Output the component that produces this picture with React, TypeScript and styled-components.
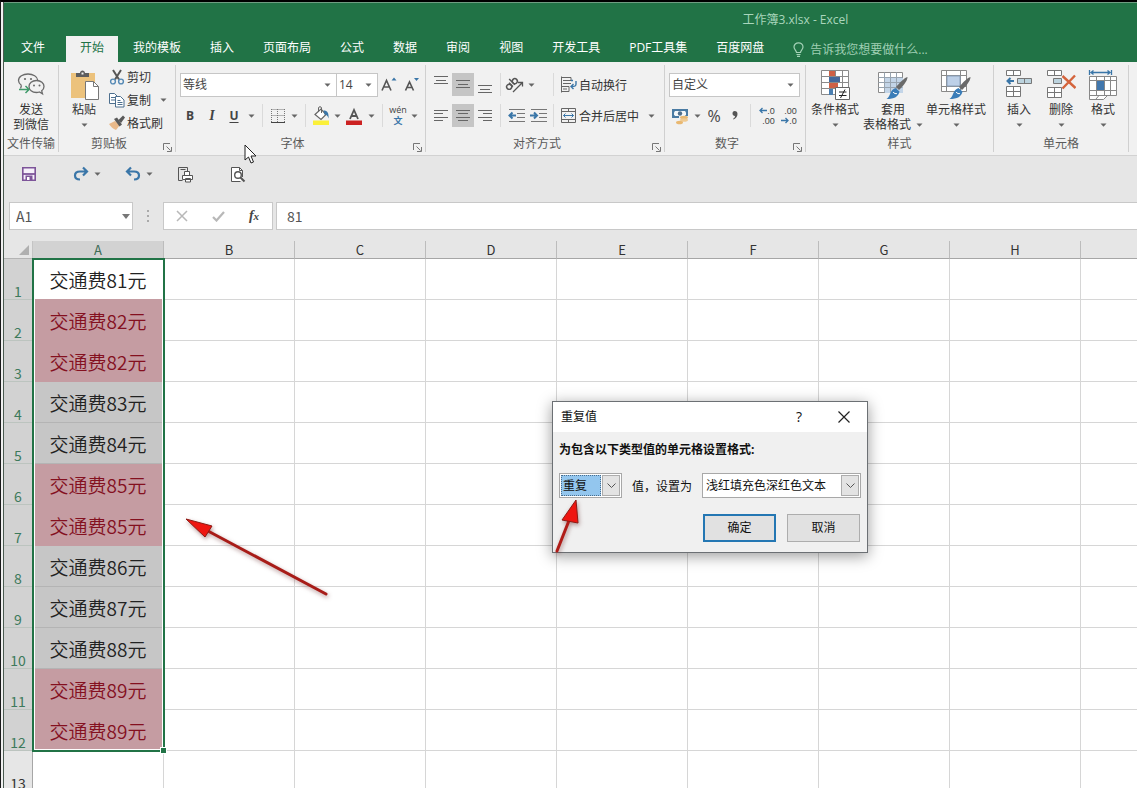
import React from "react";
import styled, { createGlobalStyle, css } from "styled-components";

const GREEN = "#217346";
const INK = "#444444";
const BLUE = "#3a76a8";

const GlobalStyle = createGlobalStyle`
  *, *::before, *::after { box-sizing: border-box; }
  html, body { margin: 0; padding: 0; }
  body {
    font-family: "Open Sans", "Noto Sans CJK SC", sans-serif;
    font-size: 12px;
    color: #333;
    background: #fff;
  }
  button, input, select { font: inherit; color: inherit; margin: 0; padding: 0; border: 0; background: none; border-radius: 0; }
  svg { display: block; flex: none; }
`;

/* ---------- window ---------- */
const Screen = styled.div`
  height: 100vh;
  border-top: 2px solid #000;
  border-left: 1px solid #1a1a1a;
  padding-left: 2px;
  background: #f1f1f1;
  overflow: hidden;
`;
const Window = styled.div`
  position: relative;
  height: 100%;
  border-left: 1px solid #4a5a50;
  background: #e6e6e6;
  display: flex;
  flex-direction: column;
`;
const TitleBar = styled.header`
  height: 34px;
  padding-left: 65%;
  border-top: 1px solid #6f9d82;
  background: ${GREEN};
  color: #a9d6bc;
  line-height: 34px;
  text-indent: 2px;
  white-space: nowrap;
`;
const TabBar = styled.nav`
  display: flex;
  height: 26px;
  gap: 1px;
  background: ${GREEN};
`;
const Tab = styled.button<{ $active?: boolean; $file?: boolean }>`
  flex: none;
  padding: 0 14px;
  line-height: 24px;
  padding-bottom: 2px;
  color: #fff;
  ${(p) => p.$file && css`padding: 0 17px 2px; margin-right: 3px;`}
  ${(p) => p.$active && css`background: #f1f1f1; color: ${GREEN};`}
`;
const TellMe = styled.button`
  display: flex;
  align-items: center;
  gap: 6px;
  margin-left: 14px;
  color: #9fcfb3;
  white-space: nowrap;
`;

/* ---------- ribbon ---------- */
const Ribbon = styled.div`
  display: flex;
  padding: 3px 0;
  background: #f1f1f1;
  border-bottom: 1px solid #d2d2d2;
`;
const Group = styled.section<{ $w: number }>`
  flex: none;
  display: flex;
  flex-direction: column;
  width: ${(p) => p.$w}px;
  border-right: 1px solid #d0d0d0;
`;
const GroupBody = styled.div<{ $pad?: number; $center?: boolean }>`
  display: flex;
  height: 72px;
  padding-left: ${(p) => p.$pad ?? 0}px;
  justify-content: ${(p) => (p.$center ? "center" : "flex-start")};
`;
const GroupFoot = styled.div`
  display: flex;
  align-items: flex-end;
  height: 15px;
  line-height: 16px;
  color: #5a5a5a;
`;
const GroupLabel = styled.span`
  flex: 1;
  text-align: center;
  white-space: nowrap;
`;
const Launcher = styled.button`
  width: 16px;
  padding-left: 4px;
`;
const Rows = styled.div`
  display: flex;
  flex-direction: column;
  gap: 8px;
  padding-top: 8px;
`;
const Row = styled.div<{ $inset?: number }>`
  display: flex;
  align-items: center;
  height: 23px;
  padding-left: ${(p) => p.$inset ?? 0}px;
`;
const Tool = styled.button<{ $w?: number; $on?: boolean }>`
  display: flex;
  align-items: center;
  justify-content: center;
  width: ${(p) => p.$w ?? 22}px;
  height: 23px;
  color: ${INK};
  background: ${(p) => (p.$on ? "#c5c5c5" : "transparent")};
`;
const Letter = styled.span<{ $kind: "b" | "i" | "u" | "pct" }>`
  font-size: 12px;
  line-height: 16px;
  font-weight: 700;
  color: ${INK};
  ${(p) => p.$kind === "i" && css`font-family: "Liberation Serif", serif; font-style: italic; font-size: 14px;`}
  ${(p) => p.$kind === "u" && css`text-decoration: underline; text-underline-offset: 2px;`}
  ${(p) => p.$kind === "pct" && css`font-weight: 400; font-size: 16px;`}
`;
const CaretButton = styled.button`
  display: flex;
  align-items: center;
  justify-content: center;
  flex: none;
  width: 12px;
  height: 16px;
`;
const Divider = styled.span<{ $w: number }>`
  width: ${(p) => p.$w}px;
  height: 23px;
  display: flex;
  justify-content: center;
  &::before { content: ""; width: 1px; background: #dadada; }
`;
const Cluster = styled.div`
  display: flex;
  align-items: center;
  width: 44px;
`;
const Combo = styled.label<{ $w: number; $joined?: boolean }>`
  display: flex;
  align-items: center;
  width: ${(p) => p.$w}px;
  height: 24px;
  padding: 0 5px 0 2px;
  background: #fff;
  border: 1px solid #c6c6c6;
  ${(p) => p.$joined && css`border-left: 0;`}
`;
const ComboInput = styled.input`
  flex: 1;
  min-width: 0;
  width: 0;
  line-height: 18px;
  color: ${INK};
  outline: 0;
`;
const TextTool = styled.button`
  display: flex;
  align-items: center;
  gap: 2px;
  height: 23px;
  white-space: nowrap;
`;
const SmallColumn = styled.div`
  display: flex;
  flex-direction: column;
  padding-left: 8px;
`;
const WithCaret = styled.div`
  display: flex;
  align-items: center;
  gap: 6px;
`;
const Big = styled.button<{ $w: number }>`
  display: flex;
  flex-direction: column;
  align-items: center;
  width: ${(p) => p.$w}px;
  padding-top: 5px;
  line-height: 15px;
  white-space: nowrap;
  svg + span { margin-top: 2px; }
`;
const CaretLine = styled.span`
  display: flex;
  align-items: center;
  gap: 5px;
  height: 15px;
`;

/* ---------- quick access and formula bar ---------- */
const QuickBar = styled.div`
  display: flex;
  height: 36px;
  padding-left: 17px;
`;
const QuickSlot = styled.div`
  display: flex;
  align-items: center;
  gap: 2px;
  width: 52px;
`;
const FormulaBar = styled.div`
  display: flex;
  align-items: center;
  height: 49px;
  padding: 0 0 1px 5px;
`;
const Field = styled.div<{ $w?: number }>`
  display: flex;
  align-items: center;
  height: 28px;
  border: 1px solid #c8c8c8;
  background: #fff;
  ${(p) => (p.$w ? css`width: ${p.$w}px;` : css`flex: 1; margin-left: 3px; border-right: 0;`)}
`;
const FieldInput = styled.input`
  flex: 1;
  min-width: 0;
  padding-left: 6px;
  font-family: "Noto Sans CJK SC", sans-serif;
  font-size: 14px;
  line-height: 20px;
  color: #555;
  outline: 0;
`;
const FormulaField = styled(FieldInput)`
  padding-left: 10px;
`;
const Grip = styled.span`
  display: flex;
  justify-content: center;
  width: 30px;
`;
const FieldTool = styled.button`
  flex: 1;
  display: flex;
  justify-content: center;
`;
const Fx = styled.span`
  font-family: "Liberation Serif", serif;
  font-style: italic;
  font-weight: 700;
  font-size: 14px;
  line-height: 16px;
  color: ${INK};
  small { font-size: 11px; }
`;

/* ---------- sheet ---------- */
const SheetArea = styled.main`
  position: relative;
  flex: 1;
  min-height: 0;
  overflow: hidden;
  background: #fff;
`;
const Sheet = styled.table`
  table-layout: fixed;
  width: 1208px;
  border-spacing: 0;
  border-collapse: separate;
  font-family: "Noto Sans CJK SC", sans-serif;
`;
const Corner = styled.th`
  width: 29px;
  height: 18px;
  padding: 0 3px 0 0;
  background: #e6e6e6;
  border-right: 1px solid #c4c4c4;
  border-bottom: 1px solid #b4b4b4;
  vertical-align: middle;
  svg { margin-left: auto; }
`;
const ColHead = styled.th<{ $on?: boolean }>`
  width: 131px;
  height: 18px;
  padding: 0;
  font-size: 13px;
  line-height: 17px;
  font-weight: 400;
  color: ${(p) => (p.$on ? "#3d6b54" : "#333")};
  background: ${(p) => (p.$on ? "#d2d2d2" : "#e6e6e6")};
  border-right: 1px solid #bcbcbc;
  border-bottom: 1px solid #a6a6a6;
`;
const RowHead = styled.th<{ $on?: boolean }>`
  height: 41px;
  padding: 0;
  vertical-align: bottom;
  font-size: 14px;
  line-height: 15px;
  font-weight: 400;
  color: ${(p) => (p.$on ? "#3d7a5c" : "#333")};
  background: ${(p) => (p.$on ? "#d2d2d2" : "#e6e6e6")};
  border-right: 1px solid #a6a6a6;
  border-bottom: 1px solid #bcc4bf;
`;
type Tone = "plain" | "active" | "grey" | "dup";
const tones = {
  plain: css`background: #fff; border-color: #d6d6d6;`,
  active: css`background: #fff; border-bottom-color: #c59ca2;`,
  grey: css`background: #c6c6c6; border-bottom-color: #b4b4b4;`,
  dup: css`background: #c59ca2; border-bottom-color: #c59ca2; color: #84101f;`,
};
const Cell = styled.td<{ $tone: Tone }>`
  height: 41px;
  padding: 1px 0 0;
  text-align: center;
  font-size: 19px;
  font-weight: 350;
  line-height: 28px;
  color: #222;
  border-right: 1px solid #d6d6d6;
  border-bottom: 1px solid #d6d6d6;
  white-space: nowrap;
  ${(p) => tones[p.$tone]}
`;
const Selection = styled.div`
  position: absolute;
  left: 28px;
  top: 17px;
  width: 133px;
  height: 494px;
  border: 2px solid ${GREEN};
  box-shadow: inset 0 0 0 1px #fff;
  pointer-events: none;
  &::after {
    content: "";
    position: absolute;
    right: -4px;
    bottom: -4px;
    width: 7px;
    height: 7px;
    background: ${GREEN};
    border: 1px solid #fff;
  }
`;

/* ---------- dialog ---------- */
const Dialog = styled.form`
  position: absolute;
  left: 548px;
  top: 399px;
  width: 316px;
  border: 1px solid #6c7074;
  background: #f0f0f0;
  color: #111;
  box-shadow: 0 3px 14px rgba(0, 0, 0, 0.4);
`;
const DialogTitle = styled.div`
  display: flex;
  align-items: center;
  height: 30px;
  padding: 0 17px 1px 8px;
  background: #fff;
`;
const DialogName = styled.h2`
  flex: 1;
  margin: 0;
  font-size: 12px;
  line-height: 18px;
  font-weight: 400;
`;
const TitleTool = styled.button`
  display: flex;
  justify-content: center;
  width: 12px;
  font-size: 14px;
  line-height: 18px;
  & + & { margin-left: 33px; }
`;
const DialogBody = styled.div`
  padding: 9px 6px 10px 6px;
`;
const Prompt = styled.p`
  margin: 0;
  font-weight: 700;
  line-height: 18px;
`;
const Choices = styled.div`
  display: flex;
  align-items: center;
  padding-top: 14px;
`;
const Between = styled.span`
  flex: 1;
  padding-left: 10px;
  white-space: nowrap;
`;
const SelectBox = styled.div<{ $w: number }>`
  display: flex;
  width: ${(p) => p.$w}px;
  height: 25px;
  padding: 1px;
  background: #fff;
  border: 1px solid #a8a8a8;
`;
const Select = styled.select<{ $focus?: boolean }>`
  appearance: none;
  flex: 1;
  min-width: 0;
  padding-left: 2px;
  line-height: 18px;
  color: #111;
  ${(p) => p.$focus && css`padding-left: 1px; background: #93c6ee; border: 1px dotted #4a6d8c;`}
`;
const SelectArrow = styled.span`
  display: flex;
  align-items: center;
  justify-content: center;
  width: 18px;
  margin-left: 1px;
  background: #e3e3e3;
  border: 1px solid #adadad;
  pointer-events: none;
`;
const Actions = styled.div`
  display: flex;
  justify-content: flex-end;
  gap: 11px;
  padding: 16px 1px 0 0;
`;
const Action = styled.button<{ $primary?: boolean }>`
  width: 73px;
  height: 28px;
  padding-bottom: 2px;
  background: #e1e1e1;
  border: 1px solid #adadad;
  ${(p) => p.$primary && css`border: 2px solid #2477b3;`}
`;
const Annotation = styled.svg<{ $x: number; $y: number }>`
  position: absolute;
  left: ${(p) => p.$x}px;
  top: ${(p) => p.$y}px;
  pointer-events: none;
  overflow: visible;
  filter: drop-shadow(1px 2px 2px rgba(110, 50, 50, 0.5));
`;
const Pointer = styled.svg`
  position: absolute;
  left: 240px;
  top: 142px;
  pointer-events: none;
`;

/* ---------- icons ---------- */
const Down = () => (
  <svg width="7" height="4" viewBox="0 0 7 4"><path d="M0.5 0.5h6L3.5 3.8z" fill="#666" /></svg>
);
const Caret = ({ label }: { label: string }) => (
  <CaretButton type="button" aria-label={label}><Down /></CaretButton>
);
const LauncherIcon = () => (
  <svg width="9" height="9" viewBox="0 0 9 9" fill="none" stroke="#777">
    <path d="M0.5 7V0.5H7M3.5 3.5l4 4M8.5 4v4.5H4" />
  </svg>
);
const Lines = ({ rows }: { rows: [number, number, number][] }) => (
  <svg width="14" height="20" viewBox="0 0 14 20" stroke="#666">
    {rows.map(([y, a, b]) => <path key={y} d={`M${a} ${y}.5H${b}`} />)}
  </svg>
);
const WeChat = () => (
  <svg width="28" height="30" viewBox="0 0 28 30" fill="none" stroke="#6b6b6b" strokeWidth="1.300">
    <path d="M4.500 15.500C2.500 14 1.500 12 1.500 10.500 1.500 6.500 6 4 11 4c5 0 9.500 2.500 9.800 6.200" />
    <path d="M4.500 15.500L3.500 18.500" />
    <path d="M19.500 10.500c-4.500 0-7.500 2.700-7.500 6s3 6 7.500 6c1 0 2-.2 3-.5l3 1.800-.8-3c1.500-1.200 2.300-2.600 2.300-4.300 0-3.300-3-6-7.500-6z" />
    <path d="M2 19.500h9.500M8.500 16l3.500 3.500L8.500 23" stroke="#3f9a6a" strokeWidth="1.500" />
    <g fill="#6b6b6b" stroke="none"><circle cx="8" cy="9" r="1.100" /><circle cx="14" cy="9" r="1.100" /><circle cx="17" cy="15.500" r="1" /><circle cx="22.500" cy="15.500" r="1" /></g>
  </svg>
);
const Paste = () => (
  <svg width="30" height="30" viewBox="0 0 30 30">
    <path d="M2 3h24v25H2z" fill="#ecc27c" />
    <path d="M7 7V3h4C11-.5 16-.5 16 3h4v4z" fill="#5e5e5e" />
    <path d="M12.500 2.500h2v2h-2z" fill="#f1f1f1" />
    <path d="M16.500 11.500h8l5 5v13h-13z" fill="#fff" stroke="#777" />
    <path d="M24.500 11.500v5h5" fill="none" stroke="#777" />
  </svg>
);
const Scissors = () => (
  <svg width="16" height="16" viewBox="0 0 16 16" fill="none">
    <path d="M4 1l6 9.500M12 1L6 10.500" stroke="#555" strokeWidth="2" />
    <circle cx="4" cy="12.500" r="2.400" stroke="#5589b5" strokeWidth="1.400" />
    <circle cx="12" cy="12.500" r="2.400" stroke="#5589b5" strokeWidth="1.400" />
  </svg>
);
const Copy = () => (
  <svg width="16" height="16" viewBox="0 0 16 16" fill="#fff" stroke="#4d6f8e">
    <path d="M.5 1.500h5l3 3v7h-8z" /><path d="M2 5.500h4M2 8h4" />
    <path d="M6.500 4.500h5l3.500 3.500v7H6.500z" /><path d="M8.500 8.500h3M8.500 10.500h5M8.500 12.500h5" />
  </svg>
);
const Painter = () => (
  <svg width="16" height="16" viewBox="0 0 16 16">
    <path d="M0 9l6-3 5 4-4 5c-3-1-5-3-7-6z" fill="#e9b98a" />
    <path d="M5 4l3-1.500 5 7-2.500 2z" fill="#595959" /><path d="M9.500 5l4.500-4.500L16 2.500 12 8z" fill="#595959" />
  </svg>
);
const FontSize = ({ up }: { up?: boolean }) => (
  <svg width="18" height="20" viewBox="0 0 18 20" fill="none">
    <path d={up ? "M2 15.500L6.500 5.500l4.500 10M3.500 12h6" : "M3.500 15.500L7.500 7l4 8.500M5 12.500h5"} stroke="#555" strokeWidth="1.600" />
    <path d={up ? "M11.500 5.500h5L14 2.500z" : "M12 3h5l-2.500 3z"} fill={BLUE} />
  </svg>
);
const Borders = () => (
  <svg width="14" height="14" viewBox="0 0 14 14" stroke="#777" strokeDasharray="1 1" fill="none">
    <path d="M.5 .5h13M.5 6.500h13M.5 0v13M6.500 0v13M13.500 0v13" /><path d="M0 13.500h14" strokeDasharray="none" stroke="#444" />
  </svg>
);
const Fill = () => (
  <svg width="18" height="20" viewBox="0 0 18 20" fill="none">
    <path d="M3 8.500l6-5.500 5 5.500-5 5z" fill="#fff" stroke="#666" strokeWidth="1.200" /><path d="M6.500 6V2C6.500 .3 9.500 .3 9.500 2v5" stroke="#666" />
    <path d="M11.500 4.500c4 0 5.500 2.500 5 8-1-3-2-4-4-4z" fill={BLUE} />
    <path d="M1 14.500h16V19H1z" fill="#fbf03a" />
  </svg>
);
const FontColor = () => (
  <svg width="16" height="20" viewBox="0 0 16 20" fill="none">
    <path d="M4 13L8 4l4 9M5.500 10h5" stroke="#555" strokeWidth="1.800" /><path d="M0 14.500h16V19H0z" fill="#c22" />
  </svg>
);
const Comma = () => (
  <svg width="6" height="9" viewBox="0 0 6 9"><path d="M2.500 0C4.500 0 5.500 1.200 5.500 3c0 2.500-1.500 4.500-4 5.500L1 7.800C2.500 7 3 6 3 5 1.500 5 .5 4 .5 2.500S1.300 0 2.500 0z" fill="#555" /></svg>
);
const Pinyin = styled.span`
  display: flex;
  flex-direction: column;
  align-items: center;
  font-size: 9px;
  line-height: 10px;
  b { color: ${BLUE}; line-height: 12px; font-size: 9px; }
`;
const Orient = () => (
  <svg width="20" height="18" viewBox="0 0 20 18" fill="none" stroke="#555">
    <g transform="rotate(-45 7 8)" strokeWidth="1.500">
      <circle cx="3" cy="8" r="2.500" /><path d="M5.800 5v5.500M8.500 2.500v8" /><circle cx="11" cy="8" r="2.500" />
    </g>
    <path d="M8 16l9-9M13 6.500H17.500v4" strokeWidth="1.300" />
  </svg>
);
const Indent = ({ out }: { out?: boolean }) => (
  <svg width="17" height="14" viewBox="0 0 17 14" fill="none" stroke="#777">
    <path d="M1 .500h16M9 4.500h8M9 8.500h8M1 12.500h16" />
    <path d={out ? "M8 6.500H1.500M4.500 3.500l-3 3 3 3" : "M0 6.500H6.500M4 3.500l3 3-3 3"} stroke={BLUE} strokeWidth="2" />
  </svg>
);
const Wrap = () => (
  <svg width="17" height="17" viewBox="0 0 17 17" fill="none" stroke="#666">
    <path d="M1.500 .5v16M1 1.500h10M3 4.500h8v-3M3 7.500h8M1 10.500h8v5H1M3 13h4" />
    <path d="M11 4.500h2M16 5v3c0 2-1 2.500-4.500 2.500M13.500 8l-2.500 2.500 2.500 2.500" stroke={BLUE} strokeWidth="1.400" />
  </svg>
);
const Merge = () => (
  <svg width="17" height="17" viewBox="0 0 17 17" fill="none" stroke="#666">
    <path d="M1.500 1.500h14v14h-14zM1.500 4.500h14M1.500 12.500h14M8.500 1.500v3M8.500 12.500v3" />
    <path d="M3.500 8.500h10M5.500 6.500l-2 2 2 2M11.500 6.500l2 2-2 2" stroke={BLUE} />
  </svg>
);
const Currency = () => (
  <svg width="18" height="18" viewBox="0 0 18 18" fill="none">
    <path d="M1 2h16v9H1z" fill="#4a7ba3" /><path d="M4 4h10l1 1.500v2L14 9H4L3 7.500v-2z" fill="#f5f8fa" /><circle cx="9" cy="6.500" r="2.200" fill="#4f6f8c" />
    <path d="M8 9h10v5H8z" fill="#f1f1f1" />
    <ellipse cx="13" cy="10.500" rx="4" ry="1.800" fill="#e9b871" /><ellipse cx="13" cy="13" rx="4" ry="1.800" fill="#efca92" /><ellipse cx="8.500" cy="15.500" rx="3.500" ry="1.800" fill="#e9b871" />
  </svg>
);
const DecimalText = styled.span`
  display: flex;
  flex-direction: column;
  align-items: flex-end;
  font-family: "Liberation Sans", sans-serif;
  font-size: 9px;
  line-height: 10px;
  span { display: flex; align-items: center; }
`;
const DecimalArrow = ({ right }: { right?: boolean }) => (
  <svg width="8" height="7" viewBox="0 0 8 7" fill="none" stroke={BLUE} strokeWidth="1.300">
    <path d={right ? "M0 3.500h7M4.500 1l2.500 2.500L4.500 6" : "M8 3.500H1M3.500 1L1 3.500 3.500 6"} />
  </svg>
);
const CondFormat = () => (
  <svg width="30" height="30" viewBox="0 0 30 30" stroke="#8a8a8a" fill="#fff">
    <path d="M1.500 .5h27v24h-27z" /><path d="M1.500 6.500h27M1.500 12.500h27M1.500 18.500h27M9.500 .5v24M15.500 .5v24M22.500 .5v24" />
    <g stroke="none"><path d="M9 1h6v5H9zM9 13h9v5H9z" fill="#cf6146" /><path d="M9 7h11v5H9z" fill="#44699c" /><path d="M9 19h4v6H9z" fill="#4a7eb0" /></g>
    <path d="M15.500 17.500h14v12h-14z" stroke="#666" /><path d="M19 22h7.500M19 25.500h7.500M25 19.500l-4.500 8.500" stroke="#222" />
  </svg>
);
const Brush = () => (
  <g stroke="none">
    <path d="M29.500 7c0 4-4.500 9-8.500 13l-3-3C22 12.500 26 8 29.500 7z" fill="#6a6a6a" />
    <path d="M17.500 18l4 3.500c-1 5-5 7.500-13 7.500 4-2 3-9 9-11z" fill="#3b7db8" />
    <path d="M15 22c1 1.500 3 2 4 1.500" stroke="#fff" fill="none" />
  </g>
);
const TableFormat = () => (
  <svg width="30" height="30" viewBox="0 0 30 30" stroke="#8a8a8a" fill="#fff">
    <path d="M.5 2.500h24v20H.5z" /><path d="M7 8h18v15H7z" fill="#c3d5e8" stroke="none" />
    <path d="M.5 7.500h24M.5 12.500h24M.5 17.500h24M6.500 2.500v20M12.500 2.500v20M18.500 2.500v20" fill="none" stroke="#98a4b0" />
    <Brush />
  </svg>
);
const CellStyle = () => (
  <svg width="30" height="30" viewBox="0 0 30 30" stroke="#8a8a8a" fill="#fff">
    <path d="M.5 .5h25v21H.5z" /><path d="M.5 5.500h25M.5 16.500h25M5.500 .5v21M19.500 .5v21" /><path d="M6 6h13v10H6z" fill="#bdd0e8" stroke="#8aa0bb" />
    <Brush />
  </svg>
);
const InsertCells = () => (
  <svg width="28" height="30" viewBox="0 0 28 30" stroke="#777" fill="#fff">
    <path d="M1.500 .5h14v5h-14zM8.500 .5v5M1.500 16.500h14v10h-14zM8.500 16.500v10M1.500 21.500h14" />
    <path d="M12.500 8.500h14v5h-14zM19.500 8.500v5" fill="#bcd3de" />
    <path d="M9 11H3M5.500 8L2.500 11l3 3" fill="none" stroke={BLUE} strokeWidth="2" />
  </svg>
);
const DeleteCells = () => (
  <svg width="30" height="30" viewBox="0 0 30 30" stroke="#777" fill="#fff">
    <path d="M1.500 .5h14v5h-14zM8.500 .5v5M1.500 17.500h14v10h-14zM8.500 17.500v10M1.500 22.500h14" />
    <path d="M7.500 8.500h8v5h-8z" fill="#bcd3de" />
    <path d="M16.500 6l13 12M29 5.500L16.500 18.500" stroke="#d4643c" strokeWidth="2.400" fill="none" />
  </svg>
);
const FormatCells = () => (
  <svg width="30" height="30" viewBox="0 0 30 30" stroke="#888" fill="#fff">
    <path d="M1.500 6.500h27v19h-9l-4 4h-14z" /><path d="M1.500 10.500h27M1.500 20.500h27M1.500 25.500h19M8.500 6.500v19M16.500 6.500v19M22.500 6.500v19M8 29l3-3.500" fill="none" />
    <path d="M9 11h7v9H9z" fill="#4177ad" stroke="none" />
    <path d="M1.500 0v5M23.500 0v5M3 2.500h19M5.500 .5l-2.500 2 2.500 2M19.500 .5l2.500 2-2.500 2" stroke={BLUE} strokeWidth="1.300" fill="none" />
  </svg>
);
const Bulb = () => (
  <svg width="11" height="15" viewBox="0 0 11 15" fill="none" stroke="#a5d3b8" strokeWidth="1.200">
    <path d="M3.500 10.500C3.500 8.500 1 7.500 1 5a4.500 4.200 0 0 1 9 0c0 2.500-2.500 3.500-2.500 5.500zM3.500 12.500h4M4 14.300h3" />
  </svg>
);
const Save = () => (
  <svg width="16" height="16" viewBox="0 0 16 16"><path d="M1.800 1.800h12.400v12.400H1.800z" fill="#f6f0fa" stroke="#7d5499" strokeWidth="1.600" /><path d="M2 8h12" stroke="#7d5499" strokeWidth="1.800" /><path d="M4.500 9.500h7V15h-7z" fill="#7d5499" /><path d="M6 11h2.500v3H6z" fill="#fff" /></svg>
);
const Turn = ({ undo }: { undo?: boolean }) => (
  <svg width="16" height="16" viewBox="0 0 16 16" fill="none" stroke={BLUE} strokeWidth="2.200">
    <g transform={undo ? undefined : "matrix(-1 0 0 1 16 0)"}><path d="M6 1.500L2 5.500l4 4M2.500 5.500H9c3.500 0 5 1.500 5 4s-1.500 4-5 4" /></g>
  </svg>
);
const QuickPrint = () => (
  <svg width="17" height="17" viewBox="0 0 17 17" fill="#fff" stroke="#555">
    <path d="M10.500 5V1.500h-9v13h4M3.500 3.500h5" fill="none" /><path d="M7.500 5.500h5v4h-5zM5.500 9.500h10v4h-10zM8.500 12.500h5v3.500h-5z" />
  </svg>
);
const Preview = () => (
  <svg width="17" height="17" viewBox="0 0 17 17" fill="none" stroke="#555">
    <path d="M13.500 11V4.500l-3-3h-8v14h9" fill="#fff" /><path d="M10.500 1.500v3h3" /><circle cx="9" cy="9" r="3.300" strokeWidth="1.400" /><path d="M11.500 11.500l4 4" strokeWidth="2" />
  </svg>
);
const Chevron = () => (
  <svg width="9" height="6" viewBox="0 0 9 6" fill="none" stroke="#555"><path d="M.5 .5l4 4 4-4" /></svg>
);

/* ---------- pieces ---------- */
const tabs = ["开始", "我的模板", "插入", "页面布局", "公式", "数据", "审阅", "视图", "开发工具", "PDF工具集", "百度网盘"];
const columns = ["A", "B", "C", "D", "E", "F", "G", "H", ""];
const rows: { value: string; tone: Tone }[] = [
  { value: "交通费81元", tone: "active" },
  { value: "交通费82元", tone: "dup" },
  { value: "交通费82元", tone: "dup" },
  { value: "交通费83元", tone: "grey" },
  { value: "交通费84元", tone: "grey" },
  { value: "交通费85元", tone: "dup" },
  { value: "交通费85元", tone: "dup" },
  { value: "交通费86元", tone: "grey" },
  { value: "交通费87元", tone: "grey" },
  { value: "交通费88元", tone: "grey" },
  { value: "交通费89元", tone: "dup" },
  { value: "交通费89元", tone: "dup" },
  { value: "", tone: "plain" },
];

const Foot = ({ label, launch }: { label: string; launch?: boolean }) => (
  <GroupFoot>
    <GroupLabel>{label}</GroupLabel>
    {launch && <Launcher type="button" aria-label={label + "设置"}><LauncherIcon /></Launcher>}
  </GroupFoot>
);

const BigTool = ({ icon, text, w }: { icon: React.ReactNode; text: string; w: number }) => (
  <Big type="button" $w={w}>{icon}<span>{text}</span><CaretLine><Down /></CaretLine></Big>
);

const RibbonBar = () => (
  <Ribbon>
    <Group $w={55}>
      <GroupBody $center><Big type="button" $w={50}><WeChat /><span>发送</span>到微信</Big></GroupBody>
      <Foot label="文件传输" />
    </Group>
    <Group $w={117}>
      <GroupBody $pad={8}>
        <BigTool icon={<Paste />} text="粘贴" w={34} />
        <SmallColumn>
          <TextTool type="button"><Scissors />剪切</TextTool>
          <WithCaret><TextTool type="button"><Copy />复制</TextTool><Caret label="复制选项" /></WithCaret>
          <TextTool type="button"><Painter />格式刷</TextTool>
        </SmallColumn>
      </GroupBody>
      <Foot label="剪贴板" launch />
    </Group>
    <Group $w={250}>
      <GroupBody $pad={3}>
        <Rows>
          <Row $inset={1}>
            <Combo $w={157}><ComboInput aria-label="字体名称" defaultValue="等线" /><Down /></Combo>
            <Combo $w={41} $joined><ComboInput aria-label="字号" defaultValue="14" /><Down /></Combo>
            <Tool type="button" aria-label="增大字号"><FontSize up /></Tool>
            <Tool type="button" aria-label="减小字号"><FontSize /></Tool>
          </Row>
          <Row>
            <Tool type="button"><Letter $kind="b">B</Letter></Tool>
            <Tool type="button"><Letter $kind="i">I</Letter></Tool>
            <Tool type="button"><Letter $kind="u">U</Letter></Tool>
            <Caret label="下划线选项" />
            <Divider $w={11} />
            <Tool type="button" $w={20} aria-label="边框"><Borders /></Tool><Caret label="边框选项" />
            <Divider $w={11} />
            <Tool type="button" $w={20} aria-label="填充颜色"><Fill /></Tool><Caret label="填充选项" />
            <Tool type="button" aria-label="字体颜色"><FontColor /></Tool><Caret label="颜色选项" />
            <Divider $w={11} />
            <Tool type="button" $w={20}><Pinyin>wén<b>文</b></Pinyin></Tool><Caret label="拼音选项" />
          </Row>
        </Rows>
      </GroupBody>
      <Foot label="字体" launch />
    </Group>
    <Group $w={239}>
      <GroupBody $pad={4}>
        <Rows>
          <Row>
            <Tool type="button" aria-label="顶端对齐"><Lines rows={[[1, 0, 14], [5, 2, 12], [8, 0, 14]]} /></Tool>
            <Tool type="button" $on aria-label="垂直居中"><Lines rows={[[5, 0, 14], [9, 2, 12], [12, 0, 14]]} /></Tool>
            <Tool type="button" aria-label="底端对齐"><Lines rows={[[10, 0, 14], [14, 2, 12], [17, 0, 14]]} /></Tool>
            <Divider $w={9} />
            <Cluster><Tool type="button" $w={20} aria-label="方向"><Orient /></Tool><Caret label="方向选项" /></Cluster>
            <Divider $w={9} />
            <Row $inset={2}><TextTool type="button"><Wrap />自动换行</TextTool></Row>
          </Row>
          <Row>
            <Tool type="button" aria-label="左对齐"><Lines rows={[[4, 0, 14], [7, 0, 9], [11, 0, 14], [14, 0, 9]]} /></Tool>
            <Tool type="button" $on aria-label="居中"><Lines rows={[[4, 0, 14], [7, 2, 12], [11, 0, 14], [14, 2, 12]]} /></Tool>
            <Tool type="button" aria-label="右对齐"><Lines rows={[[4, 0, 14], [7, 5, 14], [11, 0, 14], [14, 5, 14]]} /></Tool>
            <Divider $w={9} />
            <Cluster>
              <Tool type="button" aria-label="减少缩进"><Indent out /></Tool>
              <Tool type="button" aria-label="增加缩进"><Indent /></Tool>
            </Cluster>
            <Divider $w={9} />
            <Row $inset={2}><WithCaret><TextTool type="button"><Merge />合并后居中</TextTool><Caret label="合并选项" /></WithCaret></Row>
          </Row>
        </Rows>
      </GroupBody>
      <Foot label="对齐方式" launch />
    </Group>
    <Group $w={141}>
      <GroupBody $pad={4}>
        <Rows>
          <Row><Combo $w={131}><ComboInput aria-label="数字格式" defaultValue="自定义" /><Down /></Combo></Row>
          <Row>
            <Tool type="button" aria-label="会计格式"><Currency /></Tool><Caret label="货币选项" />
            <Tool type="button"><Letter $kind="pct">%</Letter></Tool>
            <Tool type="button" $w={20} aria-label="千位分隔"><Comma /></Tool>
            <Divider $w={11} />
            <Tool type="button"><DecimalText><span><DecimalArrow />.0</span><span>.00</span></DecimalText></Tool>
            <Tool type="button"><DecimalText><span>.00</span><span><DecimalArrow right />.0</span></DecimalText></Tool>
          </Row>
        </Rows>
      </GroupBody>
      <Foot label="数字" launch />
    </Group>
    <Group $w={188}>
      <GroupBody $pad={2}>
        <BigTool icon={<CondFormat />} text="条件格式" w={54} />
        <Big type="button" $w={62}><TableFormat /><span>套用</span><CaretLine>表格格式<Down /></CaretLine></Big>
        <BigTool icon={<CellStyle />} text="单元格样式" w={64} />
      </GroupBody>
      <Foot label="样式" />
    </Group>
    <Group $w={135}>
      <GroupBody $pad={4}>
        <BigTool icon={<InsertCells />} text="插入" w={42} />
        <BigTool icon={<DeleteCells />} text="删除" w={42} />
        <BigTool icon={<FormatCells />} text="格式" w={42} />
      </GroupBody>
      <Foot label="单元格" />
    </Group>
  </Ribbon>
);

const DuplicateDialog = () => (
  <Dialog onSubmit={(e) => e.preventDefault()} aria-label="重复值">
    <DialogTitle>
      <DialogName>重复值</DialogName>
      <TitleTool type="button">?</TitleTool>
      <TitleTool type="button" aria-label="关闭">
        <svg width="12" height="12" viewBox="0 0 12 12" stroke="#222" strokeWidth="1.200"><path d="M.5 .5l11 11M11.500 .5l-11 11" /></svg>
      </TitleTool>
    </DialogTitle>
    <DialogBody>
      <Prompt>为包含以下类型值的单元格设置格式:</Prompt>
      <Choices>
        <SelectBox $w={63}>
          <Select $focus aria-label="值类型"><option>重复</option><option>唯一</option></Select>
          <SelectArrow><Chevron /></SelectArrow>
        </SelectBox>
        <Between><label htmlFor="fmt">值，设置为</label></Between>
        <SelectBox $w={159}>
          <Select id="fmt"><option>浅红填充色深红色文本</option></Select>
          <SelectArrow><Chevron /></SelectArrow>
        </SelectBox>
      </Choices>
      <Actions>
        <Action type="submit" $primary>确定</Action>
        <Action type="button">取消</Action>
      </Actions>
    </DialogBody>
  </Dialog>
);

export default function App() {
  return (
    <>
      <GlobalStyle />
      <Screen>
        <Window>
          <TitleBar>工作簿3.xlsx - Excel</TitleBar>
          <TabBar>
            <Tab type="button" $file>文件</Tab>
            {tabs.map((t, i) => <Tab type="button" key={t} $active={i === 0}>{t}</Tab>)}
            <TellMe type="button"><Bulb />告诉我您想要做什么...</TellMe>
          </TabBar>
          <RibbonBar />
          <QuickBar>
            <QuickSlot><button type="button" aria-label="保存"><Save /></button></QuickSlot>
            <QuickSlot><button type="button" aria-label="恢复"><Turn /></button><Caret label="恢复选项" /></QuickSlot>
            <QuickSlot><button type="button" aria-label="撤消"><Turn undo /></button><Caret label="撤消选项" /></QuickSlot>
            <QuickSlot><button type="button" aria-label="快速打印"><QuickPrint /></button></QuickSlot>
            <QuickSlot><button type="button" aria-label="打印预览"><Preview /></button></QuickSlot>
          </QuickBar>
          <FormulaBar>
            <Field $w={124}><FieldInput aria-label="名称框" defaultValue="A1" /><CaretButton type="button" aria-label="名称列表"><svg width="8" height="5" viewBox="0 0 8 5"><path d="M0 0h8L4 5z" fill="#777" /></svg></CaretButton></Field>
            <Grip><svg width="2" height="12" viewBox="0 0 2 12" fill="#aaa"><path d="M0 0h2v2H0zM0 5h2v2H0zM0 10h2v2H0z" /></svg></Grip>
            <Field $w={110}>
              <FieldTool type="button" aria-label="取消输入"><svg width="12" height="12" viewBox="0 0 12 12" stroke="#b8b8b8" strokeWidth="1.500"><path d="M1 1l10 10M11 1L1 11" /></svg></FieldTool>
              <FieldTool type="button" aria-label="确认输入"><svg width="13" height="11" viewBox="0 0 13 11" fill="none" stroke="#b8b8b8" strokeWidth="2.200"><path d="M1 6l3.500 3.500L12 1" /></svg></FieldTool>
              <FieldTool type="button"><Fx>f<small>x</small></Fx></FieldTool>
            </Field>
            <Field><FormulaField aria-label="编辑栏" defaultValue="81" /></Field>
          </FormulaBar>
          <SheetArea>
            <Sheet>
              <thead>
                <tr>
                  <Corner aria-label="全选"><svg width="10" height="10" viewBox="0 0 10 10"><path d="M10 0v10H0z" fill="#b0b0b0" /></svg></Corner>
                  {columns.map((c, i) => <ColHead key={i} $on={i === 0}>{c}</ColHead>)}
                </tr>
              </thead>
              <tbody>
                {rows.map((r, n) => (
                  <tr key={n}>
                    <RowHead $on={n < 12}>{n + 1}</RowHead>
                    {columns.map((c, i) => (i === 0 ? <Cell key={i} $tone={r.tone}>{r.value}</Cell> : <Cell key={i} $tone="plain" />))}
                  </tr>
                ))}
              </tbody>
            </Sheet>
            <Selection />
          </SheetArea>
          <Annotation $x={182} $y={517} width="142" height="78" viewBox="0 0 142 78">
            <path d="M22 12L140 75" stroke="#a81c18" strokeWidth="3" strokeLinecap="round" />
            <path d="M0 0L26 7 19 18z" fill="#ee1510" stroke="#8c1a14" />
          </Annotation>
          <DuplicateDialog />
          <Annotation $x={552} $y={498} width="24" height="54" viewBox="0 0 24 54">
            <path d="M14 18L1 51" stroke="#b01c18" strokeWidth="3" strokeLinecap="round" />
            <path d="M20 0L22 23 6 20z" fill="#ee1510" stroke="#8c1a14" />
          </Annotation>
          <Pointer width="13" height="20" viewBox="0 0 13 20"><path d="M1 1v15l3.500-3 2.500 6 2.500-1-2.500-6H12z" fill="#fff" stroke="#222" /></Pointer>
        </Window>
      </Screen>
    </>
  );
}
